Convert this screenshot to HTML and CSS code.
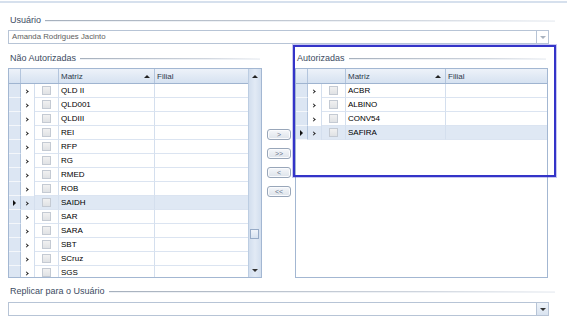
FILE: index.html
```html
<!DOCTYPE html>
<html lang="pt-BR">
<head>
    <meta charset="UTF-8">
    <title>Permissões de Empresas</title>
    <link rel="stylesheet" href="styles.css">
</head>
<body>
    <div class="topbar"></div>

    <!-- Usuário -->
    <div class="caption caption-top"><span>Usuário</span><i class="rule"></i></div>
    <div class="combo">
        <span class="combo-text">Amanda Rodrigues Jacinto</span>
        <span class="combo-btn disabled"><i class="arrow-down"></i></span>
    </div>

    <div class="lists">
        <!-- Não autorizadas -->
        <section class="panel panel-left">
            <div class="caption"><span>Não Autorizadas</span><i class="rule"></i></div>
            <div class="grid grid-left">
                <div class="grid-main">
                    <div class="grid-head">
                        <div class="h-ind"></div>
                        <div class="h-sel"></div>
                        <div class="h-col sorted">Matriz<i class="arrow-up"></i></div>
                        <div class="h-col">Filial</div>
                    </div>
                    <div class="grid-row"><div class="c-ind"></div><div class="c-exp"></div><div class="c-chk"><i class="chk"></i></div><div class="c-txt">QLD II</div><div class="c-txt"></div></div>
                    <div class="grid-row"><div class="c-ind"></div><div class="c-exp"></div><div class="c-chk"><i class="chk"></i></div><div class="c-txt">QLD001</div><div class="c-txt"></div></div>
                    <div class="grid-row"><div class="c-ind"></div><div class="c-exp"></div><div class="c-chk"><i class="chk"></i></div><div class="c-txt">QLDIII</div><div class="c-txt"></div></div>
                    <div class="grid-row"><div class="c-ind"></div><div class="c-exp"></div><div class="c-chk"><i class="chk"></i></div><div class="c-txt">REI</div><div class="c-txt"></div></div>
                    <div class="grid-row"><div class="c-ind"></div><div class="c-exp"></div><div class="c-chk"><i class="chk"></i></div><div class="c-txt">RFP</div><div class="c-txt"></div></div>
                    <div class="grid-row"><div class="c-ind"></div><div class="c-exp"></div><div class="c-chk"><i class="chk"></i></div><div class="c-txt">RG</div><div class="c-txt"></div></div>
                    <div class="grid-row"><div class="c-ind"></div><div class="c-exp"></div><div class="c-chk"><i class="chk"></i></div><div class="c-txt">RMED</div><div class="c-txt"></div></div>
                    <div class="grid-row"><div class="c-ind"></div><div class="c-exp"></div><div class="c-chk"><i class="chk"></i></div><div class="c-txt">ROB</div><div class="c-txt"></div></div>
                    <div class="grid-row selected"><div class="c-ind current"></div><div class="c-exp"></div><div class="c-chk"><i class="chk"></i></div><div class="c-txt">SAIDH</div><div class="c-txt"></div></div>
                    <div class="grid-row"><div class="c-ind"></div><div class="c-exp"></div><div class="c-chk"><i class="chk"></i></div><div class="c-txt">SAR</div><div class="c-txt"></div></div>
                    <div class="grid-row"><div class="c-ind"></div><div class="c-exp"></div><div class="c-chk"><i class="chk"></i></div><div class="c-txt">SARA</div><div class="c-txt"></div></div>
                    <div class="grid-row"><div class="c-ind"></div><div class="c-exp"></div><div class="c-chk"><i class="chk"></i></div><div class="c-txt">SBT</div><div class="c-txt"></div></div>
                    <div class="grid-row"><div class="c-ind"></div><div class="c-exp"></div><div class="c-chk"><i class="chk"></i></div><div class="c-txt">SCruz</div><div class="c-txt"></div></div>
                    <div class="grid-row"><div class="c-ind"></div><div class="c-exp"></div><div class="c-chk"><i class="chk"></i></div><div class="c-txt">SGS</div><div class="c-txt"></div></div>
                </div>
                <div class="vscroll">
                    <div class="vs-btn"><i class="arrow-up"></i></div>
                    <div class="vs-thumb"></div>
                    <div class="vs-track"></div>
                    <div class="vs-btn"><i class="arrow-down"></i></div>
                </div>
            </div>
        </section>

        <!-- Botões de transferência -->
        <div class="movers">
            <button class="mover">&gt;</button>
            <button class="mover">&gt;&gt;</button>
            <button class="mover">&lt;</button>
            <button class="mover">&lt;&lt;</button>
        </div>

        <!-- Autorizadas -->
        <section class="panel panel-right">
            <div class="caption"><span>Autorizadas</span><i class="rule"></i></div>
            <div class="grid grid-right">
                <div class="grid-main">
                    <div class="grid-head">
                        <div class="h-ind"></div>
                        <div class="h-sel"></div>
                        <div class="h-col sorted">Matriz<i class="arrow-up"></i></div>
                        <div class="h-col">Filial</div>
                    </div>
                    <div class="grid-row"><div class="c-ind"></div><div class="c-exp"></div><div class="c-chk"><i class="chk"></i></div><div class="c-txt">ACBR</div><div class="c-txt"></div></div>
                    <div class="grid-row"><div class="c-ind"></div><div class="c-exp"></div><div class="c-chk"><i class="chk"></i></div><div class="c-txt">ALBINO</div><div class="c-txt"></div></div>
                    <div class="grid-row"><div class="c-ind"></div><div class="c-exp"></div><div class="c-chk"><i class="chk"></i></div><div class="c-txt">CONV54</div><div class="c-txt"></div></div>
                    <div class="grid-row selected"><div class="c-ind current"></div><div class="c-exp"></div><div class="c-chk"><i class="chk"></i></div><div class="c-txt">SAFIRA</div><div class="c-txt"></div></div>
                </div>
            </div>
            <!-- Destaque em volta do grupo -->
            <div class="focus-box"></div>
        </section>
    </div>

    <!-- Replicar -->
    <div class="caption caption-bottom"><span>Replicar para o Usuário</span><i class="rule"></i></div>
    <div class="combo combo-last">
        <span class="combo-text"></span>
        <span class="combo-btn"><i class="arrow-down"></i></span>
    </div>
</body>
</html>
```

FILE: styles.css
```css
body {
    margin: 0;
    width: 567px;
    height: 320px;
    overflow: hidden;
    background: #fff;
    font-family: "Liberation Sans", Arial, sans-serif;
    font-size: 8px;
    color: #111;
}

.topbar {
    height: 1px;
    border-bottom: 2px solid #d6e0ed;
}

/* Group captions */
.caption {
    display: flex;
    align-items: center;
    height: 11px;
    padding: 0 12px 0 10px;
    font-size: 9px;
    color: #3c4b62;
    white-space: nowrap;
}

.caption-top {
    margin-top: 11px;
}

.caption-bottom {
    margin-top: 7px;
}

.rule {
    flex: 1;
    height: 1px;
    margin-left: 4px;
    margin-top: 2px;
    background: linear-gradient(to right, #a6b0bd, #cfd5de 70%, #f3f5f8);
    box-shadow: 0 1px 0 #eef1f5;
}

/* Combo boxes */
.combo {
    display: flex;
    box-sizing: border-box;
    height: 14px;
    margin: 5px 18px 0 8px;
    border: 1px solid #b7c4d6;
    background: #fff;
}

.combo-last {
    margin-top: 6px;
}

.combo-text {
    flex: 1;
    padding-left: 3px;
    line-height: 12px;
    font-size: 7.8px;
    color: #5e5e5e;
}

.combo-btn {
    width: 11px;
    display: flex;
    align-items: center;
    justify-content: center;
    border-left: 1px solid #b7c4d6;
    background: linear-gradient(#eef3f9, #d9e3f0);
}

.combo-btn.disabled {
    background: #fff;
}

.combo-btn.disabled .arrow-down {
    border-top-color: #a9b3c0;
}

/* Arrows */
.arrow-up,
.arrow-down {
    display: block;
    width: 0;
    height: 0;
    border-left: 3px solid transparent;
    border-right: 3px solid transparent;
}

.arrow-up {
    border-bottom: 3px solid #222;
}

.arrow-down {
    border-top: 3px solid #333;
}

/* Two lists */
.lists {
    display: flex;
    height: 234px;
    padding-left: 8px;
}

.panel .caption {
    margin-top: 8px;
}

.panel-left {
    width: 254px;
}

.panel-left .caption {
    padding: 0 2px;
}

.panel-right {
    position: relative;
    width: 263px;
}

.panel-right .caption {
    padding: 0 10px 0 4px;
}

.focus-box {
    position: absolute;
    left: 0;
    top: 1px;
    width: 263px;
    height: 132px;
    box-sizing: border-box;
    border: 2px solid #3434c8;
    box-shadow: 0 0 0 1px rgba(70, 70, 210, 0.3);
    pointer-events: none;
}

/* Grid */
.grid {
    display: flex;
    box-sizing: border-box;
    height: 210px;
    margin-top: 5px;
    border: 1px solid #a3b7d2;
    overflow: hidden;
    background: #fff;
}

.grid-right {
    width: 253px;
    margin-left: 2px;
}

.grid-main {
    flex: 1;
}

.grid-head,
.grid-row {
    display: grid;
}

.grid-left .grid-head,
.grid-left .grid-row {
    grid-template-columns: 12px 14px 24px 96px 93px;
}

.grid-right .grid-head,
.grid-right .grid-row {
    grid-template-columns: 12px 14px 24px 100px 101px;
}

.grid-head {
    height: 15px;
    box-sizing: border-box;
    border-bottom: 1px solid #9fb4d0;
    background: linear-gradient(#edf2f9, #d6e2f1);
}

.h-ind {
    border-right: 1px solid #b3c5dd;
}

.h-sel {
    grid-column: span 2;
    border-right: 1px solid #b3c5dd;
}

.h-col {
    display: flex;
    align-items: center;
    justify-content: space-between;
    padding: 0 4px 0 2px;
    border-right: 1px solid #b3c5dd;
    color: #2e3a4c;
}

.h-col:last-child {
    border-right: none;
}

.grid-row {
    height: 14px;
    box-sizing: border-box;
}

.grid-row > div {
    border-bottom: 1px solid #dbe4f1;
    border-right: 1px solid #d4dfee;
}

.grid-row > div:last-child {
    border-right: none;
}

.grid-row .c-exp {
    border-bottom: none;
    display: flex;
    align-items: center;
    justify-content: center;
}

.c-exp::before {
    content: "";
    width: 2px;
    height: 2px;
    margin-left: -2px;
    border-top: 1.5px solid #222;
    border-right: 1.5px solid #222;
    transform: rotate(45deg);
}

.grid-row .c-ind {
    background: #dce6f3;
    border-bottom: 1px solid #f4f7fb;
    border-right: 1px solid #b3c5dd;
    display: flex;
    align-items: center;
    justify-content: center;
}

.c-ind.current::before {
    content: "";
    border-top: 3px solid transparent;
    border-bottom: 3px solid transparent;
    border-left: 3px solid #111;
}

.c-chk {
    display: flex;
    align-items: center;
    justify-content: center;
}

.chk {
    width: 9px;
    height: 9px;
    box-sizing: border-box;
    border: 1px solid #c4cad3;
    background: linear-gradient(#f1f1f1, #e0e2e5);
}

.c-txt {
    padding-left: 2px;
    line-height: 13px;
    white-space: nowrap;
    overflow: hidden;
    color: #000;
}

.grid-row.selected > div {
    background: #dfe8f4;
}

.grid-row.selected > .c-ind {
    background: #dce6f3;
}

/* Vertical scroll bar */
.vscroll {
    display: flex;
    flex-direction: column;
    width: 13px;
    box-sizing: border-box;
    border-left: 1px solid #bccde2;
    background: linear-gradient(to right, #d2deee, #e2eaf5 50%, #d2deee);
}

.vs-btn {
    height: 14px;
    display: flex;
    align-items: center;
    justify-content: center;
}

.vs-thumb {
    width: 9px;
    height: 10px;
    margin: 146px 0 0 1px;
    box-sizing: border-box;
    border: 1px solid #97abc7;
    background: linear-gradient(#f0f4fa, #d7e2f0);
}

.vs-track {
    flex: 1;
}

/* Transfer buttons */
.movers {
    display: flex;
    flex-direction: column;
    align-items: flex-start;
    gap: 8px;
    width: 31px;
    box-sizing: border-box;
    padding: 85px 0 0 5px;
}

.mover {
    width: 24px;
    height: 11px;
    padding: 0;
    border: 1px solid #98a6b9;
    border-radius: 3px;
    background: linear-gradient(#f5f7fa, #dde3ea);
    box-shadow: inset 0 0 0 1px #fafbfd;
    font-family: "Liberation Sans", Arial, sans-serif;
    font-size: 7px;
    line-height: 9px;
    color: #66748a;
    cursor: pointer;
}
```
